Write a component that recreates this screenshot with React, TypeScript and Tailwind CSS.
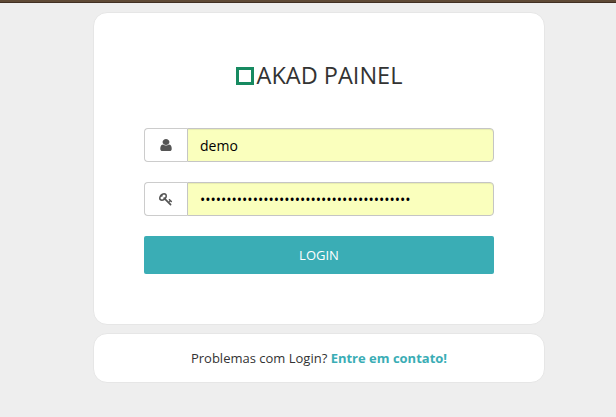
function UserIcon() {
  return (
    <svg viewBox="0 0 1792 1792" className="mr-px mb-px h-[14px] w-4" preserveAspectRatio="none" fill="currentColor" aria-hidden="true">
      <path d="M1536 1399q0 109-62.5 187t-150.5 78h-854q-88 0-150.5-78t-62.5-187q0-85 8.5-160.5t31.5-152 58.5-131 94-89 134.5-34.5q131 128 313 128t313-128q76 0 134.5 34.5t94 89 58.5 131 31.5 152 8.5 160.5zm-256-887q0 159-112.5 271.5t-271.5 112.5-271.5-112.5-112.5-271.5 112.5-271.5 271.5-112.5 271.5 112.5 112.5 271.5z" />
    </svg>
  );
}

function KeyIcon() {
  return (
    <svg viewBox="0 0 1792 1792" className="mr-px mb-px size-[14px]" fill="currentColor" aria-hidden="true">
      <path d="M832 512q0-80-56-136t-136-56-136 56-56 136q0 42 19 83-41-19-83-19-80 0-136 56t-56 136 56 136 136 56 136-56 56-136q0-42-19-83 41 19 83 19 80 0 136-56t56-136zm851 704q0 17-49 66t-66 49q-9 0-28.5-16t-36.5-33-38.5-40-24.5-26l-96 96 220 220q28 28 28 68 0 42-39 81t-81 39q-40 0-68-28l-671-671q-176 131-365 131-163 0-265.5-102.5t-102.5-265.5q0-160 95-313t248-248 313-95q163 0 265.5 102.5t102.5 265.5q0 189-131 365l355 355 96-96q-3-3-26-24.5t-40-38.5-33-36.5-16-28.5q0-17 49-66t66-49q13 0 23 10 6 6 46 44.5t82 79.5 86.5 86 73 78 28.5 41z" />
    </svg>
  );
}

const addon = "flex w-[43px] items-center justify-center rounded-l border border-r-0 border-[#ccc] bg-white text-[#555]";
const field = "w-[307px] rounded-r border border-[#c5c5c5] bg-[#faffbd] px-3 text-[14px] text-black shadow-[inset_0_1px_1px_rgba(0,0,0,0.075)] outline-none";

export default function App() {
  return (
    <div className="h-[417px] w-[616px] overflow-hidden bg-[#eeeeee] font-['Open_Sans',sans-serif] text-[#333]">
      <div className="h-[3px] border-b border-[#412f23] bg-[#5f4a36]" />
      <main className="ml-[93px] mt-[9px] flex w-[452px] flex-col gap-2">
        <form className="h-[313px] rounded-[14px] border border-[#e6e6e6] bg-white px-[50px] pt-[45px]">
          <h1 className="flex h-[34px] items-center justify-center gap-[3px] text-[23.5px] leading-[34px]">
            <span className="mt-px size-[18px] border-[3px] border-[#178a61]" />
            AKAD PAINEL
          </h1>
          <label className="mt-[36px] flex h-[34px]">
            <span className={addon}><UserIcon /></span>
            <input className={field} defaultValue="demo" aria-label="Login" />
          </label>
          <label className="mt-5 flex h-[34px]">
            <span className={addon}><KeyIcon /></span>
            <input type="password" className={field} defaultValue={"x".repeat(40)} aria-label="Senha" />
          </label>
          <button type="button" className="mt-5 h-[38px] w-full rounded-[2px] bg-[#3aadb5] pt-0.5 text-[13px] text-white">LOGIN</button>
        </form>
        <footer className="flex h-[50px] items-center justify-center rounded-[14px] border border-[#e6e6e6] bg-white pt-0.5 text-[13px]">
          <p>Problemas com Login? <a className="font-bold text-[#3aadb5]">Entre em contato!</a></p>
        </footer>
      </main>
    </div>
  );
}
